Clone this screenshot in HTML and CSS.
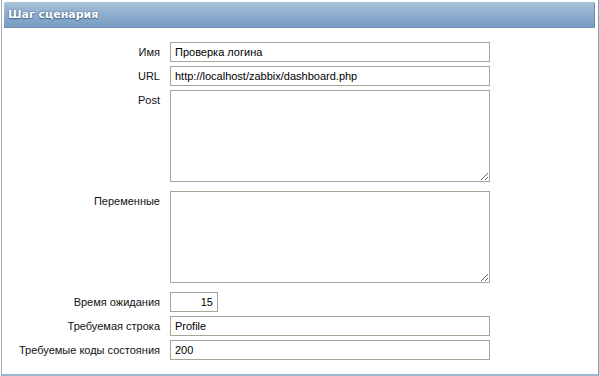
FILE: index.html
```html
<!DOCTYPE html>
<html lang="ru">
<head>
    <meta charset="UTF-8">
    <title>Шаг сценария</title>
    <link rel="stylesheet" href="styles.css">
</head>
<body>
    <div class="frame">
        <div class="header">Шаг сценария</div>
        <form class="step-form">
            <label for="name">Имя</label>
            <input type="text" id="name" value="Проверка логина">

            <label for="url">URL</label>
            <input type="text" id="url" value="http://localhost/zabbix/dashboard.php">

            <label for="post">Post</label>
            <textarea id="post"></textarea>

            <label for="variables">Переменные</label>
            <textarea id="variables"></textarea>

            <label for="timeout">Время ожидания</label>
            <input type="text" id="timeout" class="short" value="15">

            <label for="required">Требуемая строка</label>
            <input type="text" id="required" value="Profile">

            <label for="status_codes">Требуемые коды состояния</label>
            <input type="text" id="status_codes" value="200">
        </form>
    </div>
</body>
</html>
```

FILE: styles.css
```css
body {
    margin: 0;
    background: #fff;
    font-family: "Liberation Sans", Arial, sans-serif;
    font-size: 11px;
    color: #000;
}
.frame {
    margin-left: 1px;
    width: 594px;
    height: 372px;
    border-left: 1px solid #a3abb6;
    border-right: 2px solid #7d9fc3;
    border-bottom: 2px solid #9cb6d1;
    padding: 2px 0 0 2px;
    box-sizing: content-box;
}
.header {
    width: 591px;
    height: 26px;
    box-sizing: border-box;
    background: linear-gradient(#aac0d8, #91afcf 45%, #779cc2);
    border-right: 1px solid #6b8db3;
    border-bottom: 1px solid #6f8fb3;
    border-radius: 2px 2px 0 0;
    color: #fff;
    font-family: "DejaVu Sans", Verdana, sans-serif;
    font-weight: bold;
    font-size: 11px;
    line-height: 26px;
    padding-left: 4px;
    text-shadow: 0 0 2px #3d5f86, 0 1px 1px #4a6a90;
}
.step-form {
    display: grid;
    grid-template-columns: 156px 320px;
    column-gap: 10px;
    row-gap: 4px;
    padding-top: 14px;
}
label {
    text-align: right;
    line-height: 20px;
    white-space: nowrap;
    color: #111;
}
input[type="text"], textarea {
    width: 320px;
    height: 20px;
    box-sizing: border-box;
    border: 1px solid #a8a697;
    margin: 0;
    padding: 0 4px;
    font-family: "Liberation Sans", Arial, sans-serif;
    font-size: 11px;
    color: #000;
    background: #fff;
}
textarea {
    height: 92px;
    margin-bottom: 5px;
    resize: both;
}
input.short {
    width: 48px;
    text-align: right;
}
```
